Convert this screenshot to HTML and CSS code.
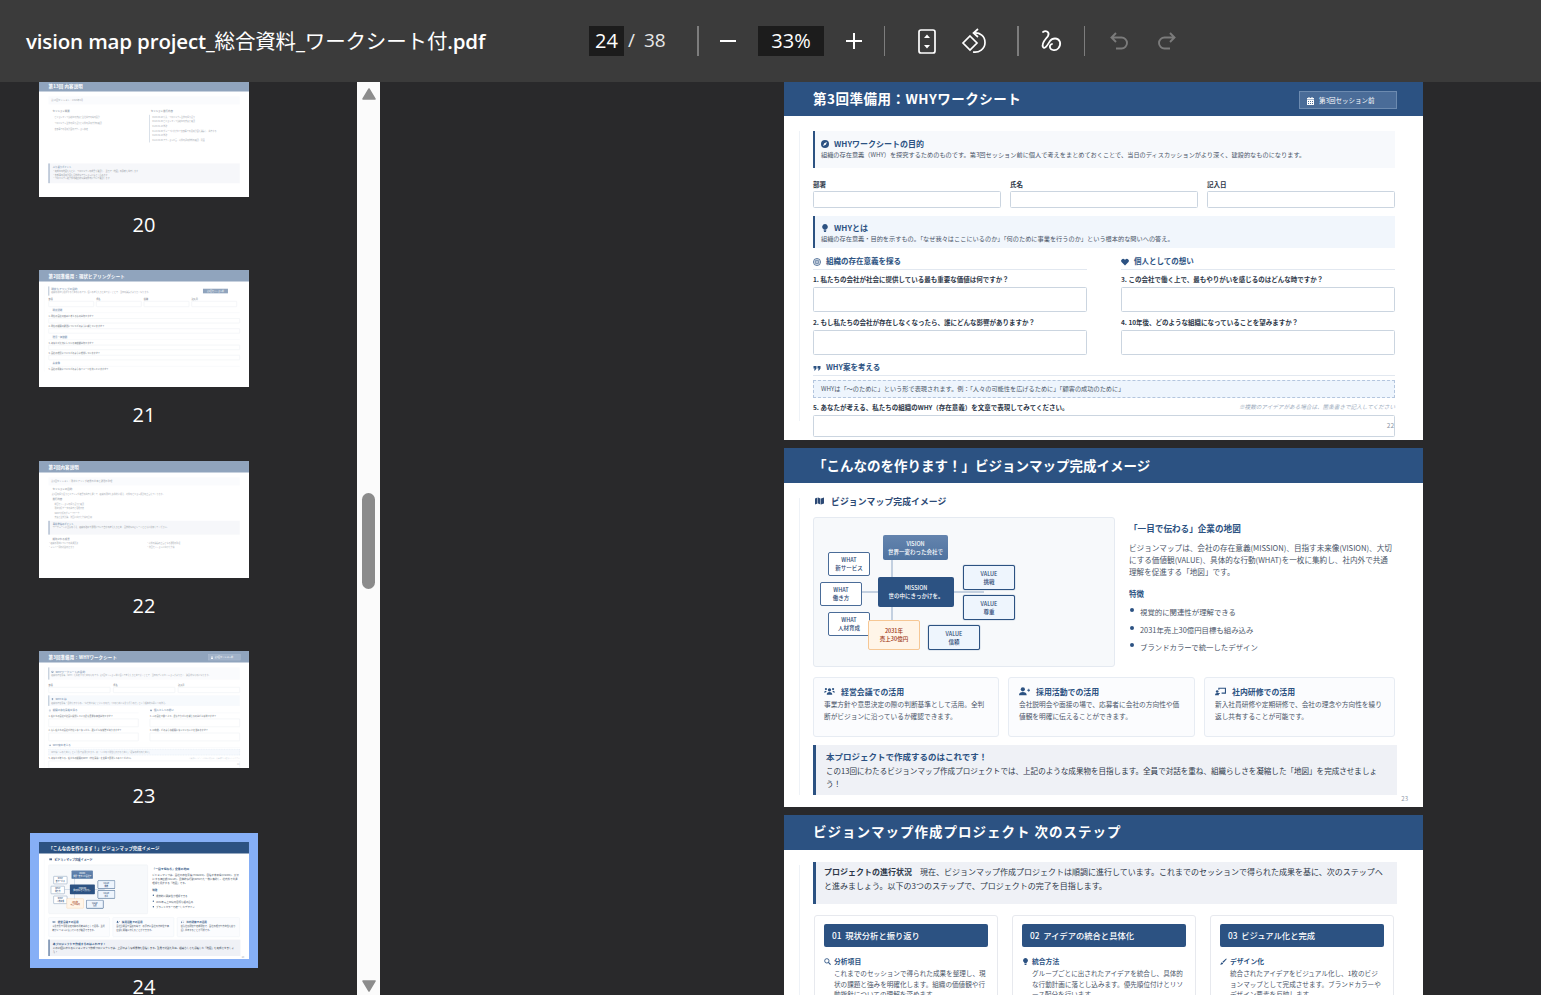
FILE: index.html
```html
<!DOCTYPE html>
<html lang="ja">
<head>
    <meta charset="UTF-8">
    <title>vision map project_総合資料_ワークシート付.pdf</title>
    <link rel="stylesheet" href="styles.css">
    <script src="script.js" defer></script>
</head>
<body>
    <svg class="sprite" width="0" height="0">
        <symbol id="i-compass" viewBox="0 0 16 16"><circle cx="8" cy="8" r="8" fill="currentColor"/><path d="M12 4 9.5 9.5 4 12l2.5-5.500z" fill="#fff"/></symbol>
        <symbol id="i-bulb" viewBox="0 0 12 16"><path d="M6 0a5.500 5.500 0 0 0-3.200 10c.5.400.7 1 .7 1.500h5c0-.5.200-1.100.7-1.500A5.500 5.500 0 0 0 6 0zM3.500 12.500h5V14l-1 2h-3l-1-2z" fill="currentColor"/></symbol>
        <symbol id="i-target" viewBox="0 0 16 16"><circle cx="8" cy="8" r="7" fill="none" stroke="currentColor" stroke-width="1.600"/><circle cx="8" cy="8" r="3.800" fill="none" stroke="currentColor" stroke-width="1.500"/><circle cx="8" cy="8" r="1.300" fill="currentColor"/></symbol>
        <symbol id="i-heart" viewBox="0 0 16 16"><path d="M8 15 1.500 8.500a4 4 0 0 1 5.700-5.700l.8.800.8-.8a4 4 0 0 1 5.700 5.700z" fill="currentColor"/></symbol>
        <symbol id="i-quote" viewBox="0 0 16 16"><path d="M1 4h6v5l-3 4H2l1.500-4H1zM9 4h6v5l-3 4h-2l1.500-4H9z" fill="currentColor"/></symbol>
        <symbol id="i-calendar" viewBox="0 0 14 16"><path d="M3 0h2v2h4V0h2v2h3v3H0V2h3zM0 6h14v10H0zm2 2v2h2V8zm4 0v2h2V8zm4 0v2h2V8zm-8 4v2h2v-2zm4 0v2h2v-2zm4 0v2h2v-2z" fill="currentColor" fill-rule="evenodd"/></symbol>
        <symbol id="i-map" viewBox="0 0 18 16"><path d="M0 3 5 1v12l-5 2zM6 1l5 2v12l-5-2zM12 3l6-2v12l-6 2z" fill="currentColor"/></symbol>
        <symbol id="i-users" viewBox="0 0 20 16"><circle cx="10" cy="5" r="3" fill="currentColor"/><circle cx="3.500" cy="3.500" r="2" fill="currentColor"/><circle cx="16.500" cy="3.500" r="2" fill="currentColor"/><path d="M5 14c0-3 2-5 5-5s5 2 5 5zM0 10c0-2 1.200-3 3.500-3 .7 0 1.200.5 1.500 1-1.200.7-2 1.500-2.300 2zM20 10c0-2-1.200-3-3.500-3-.7 0-1.200.5-1.500 1 1.200.7 2 1.500 2.300 2z" fill="currentColor"/></symbol>
        <symbol id="i-userplus" viewBox="0 0 20 16"><circle cx="7" cy="4" r="3.800" fill="currentColor"/><path d="M0 15c0-4 3-6 7-6s7 2 7 6zM15 5h2V3h1.500v2H20v1.500h-1.500v2H17v-2h-2z" fill="currentColor"/></symbol>
        <symbol id="i-board" viewBox="0 0 20 16"><path d="M6 1h14v11h-8v-2h6V3H8v2H6z" fill="currentColor"/><circle cx="4" cy="8" r="2.400" fill="currentColor"/><path d="M0 15c0-3 1.500-4.500 4-4.500h5V12H7v3z" fill="currentColor"/></symbol>
        <symbol id="i-search" viewBox="0 0 16 16"><circle cx="6.500" cy="6.500" r="5" fill="none" stroke="currentColor" stroke-width="2"/><path d="m10 10 5 5" stroke="currentColor" stroke-width="2.400"/></symbol>
        <symbol id="i-pen" viewBox="0 0 16 16"><path d="M14 1l1.500 1.500L8 11 5.500 8.500zM4.500 9.500l2.500 2.500C6.500 15 3 15.500 0 15c2-1 1.500-4.500 4.500-5.500z" fill="currentColor"/></symbol>
    </svg>

    <header class="toolbar">
        <div class="doc-title">vision map project_<span class="cjk">総合資料_ワークシート付</span>.pdf</div>
        <div class="page-box">24</div>
        <div class="page-total">/ 38</div>
        <div class="sep sep-a"></div>
        <svg class="tool tool-minus" width="16" height="16" viewBox="0 0 16 16"><path d="M0 8h16" stroke="#fff" stroke-width="2"/></svg>
        <div class="zoom-box">33%</div>
        <svg class="tool tool-plus" width="16" height="16" viewBox="0 0 16 16"><path d="M0 8h16M8 0v16" stroke="#fff" stroke-width="2"/></svg>
        <div class="sep sep-b"></div>
        <svg class="tool tool-fit" width="18" height="25" viewBox="0 0 18 25"><rect x="1" y="1" width="16" height="23" rx="2" fill="none" stroke="#fff" stroke-width="1.700"/><path d="M9 5.500 12 9H6zM9 19.500 12 16H6z" fill="#fff"/></svg>
        <svg class="tool tool-rotate" width="27" height="26" viewBox="0 0 27 26"><path d="M9 8 16 15 9 22 2 15z" fill="none" stroke="#fff" stroke-width="1.700"/><path d="M13 5c6-.5 11 3 11 9.500S18 25 12 24" fill="none" stroke="#fff" stroke-width="1.700"/><path d="M17 1l-4.500 4 4.500 4" fill="none" stroke="#fff" stroke-width="1.700"/></svg>
        <div class="sep sep-c"></div>
        <svg class="tool tool-draw" width="22" height="25" viewBox="0 0 22 25"><path d="M3 3C6 1 10 3 8 7 6 10 1 14 3 18c2 3 5-3 7-6 2-3 8-4 10 1 1 5-3 9-7 8-4-1-4-5-1-6" fill="none" stroke="#fff" stroke-width="1.800" stroke-linecap="round"/></svg>
        <div class="sep sep-d"></div>
        <svg class="tool tool-undo" width="18" height="18" viewBox="0 0 18 18"><path d="M6 1 1.500 5.500 6 10M2 5.500h9.500a5 5 0 0 1 0 11H6" fill="none" stroke="#7b7b7b" stroke-width="1.900"/></svg>
        <svg class="tool tool-redo" width="18" height="18" viewBox="0 0 18 18"><path d="M12 1l4.500 4.500L12 10M16 5.500H6.500a5 5 0 0 0 0 11H12" fill="none" stroke="#7b7b7b" stroke-width="1.900"/></svg>
    </header>

    <div class="workspace">
        <aside class="sidebar">
            <div class="thumb-item first">
                <div class="thumb"><div class="thumb-inner faded">
                    <section class="page">
                        <div class="page-head">第13回 内容説明</div>
                        <div class="page-body flat">
                            <div class="tab-row">第13回セッション｜2026年3月</div>
                            <div class="two-col tall">
                                <div>
                                    <h3 class="sec-head plain">セッション概要</h3>
                                    <ul class="mini-list">
                                        <li>ビジョンマップ最終版の発表と全社共有の場の設計</li>
                                        <li>プロジェクト全体の振り返りと今後の運用方法の確認</li>
                                        <li>各部署での活用計画のアクション策定</li>
                                    </ul>
                                </div>
                                <div>
                                    <h3 class="sec-head plain">セッション進行内容</h3>
                                    <ul class="mini-list ruled">
                                        <li>00:00-00:20 導入：プロジェクト全体の振り返り</li>
                                        <li>00:20-01:00 ビジョンマップ最終版の発表と確認</li>
                                        <li>01:00-01:10 休憩</li>
                                        <li>01:10-02:00 グループに分かれて各部署での活用計画を議論し、共有する</li>
                                        <li>02:00-02:10 休憩</li>
                                        <li>02:10-03:00 アクション宣言、今後の運用体制の確認、閉会</li>
                                    </ul>
                                </div>
                            </div>
                            <div class="note-box low">
                                <h4>ふり返りポイント</h4>
                                <p>・完成版の地図をもとに、プロジェクトの成果を確認し、全員で「地図」の意味を共有します</p>
                                <p>・各部署の活用計画を具体的なアクションに落とし込みます</p>
                                <p>・プロジェクト終了後の継続的な運用体制について確認します</p>
                            </div>
                        </div>
                    </section>
                </div></div>
                <div class="thumb-num">20</div>
            </div>
            <div class="thumb-item">
                <div class="thumb"><div class="thumb-inner faded">
                    <section class="page">
                        <div class="page-head">第2回準備用：現状ヒアリングシート</div>
                        <div class="page-body">
                            <div class="hear-top">
                                <div class="info-box short"><h4>現状ヒアリングの目的</h4><p>組織の現状を把握するためのものです。個人の考えをまとめておくことで、当日の議論がより深くなります。</p></div>
                                <span class="hear-tag">第2回セッション前</span>
                            </div>
                            <div class="field-row four">
                                <div class="field"><label>部署</label><div class="input"></div></div>
                                <div class="field"><label>氏名</label><div class="input"></div></div>
                                <div class="field"><label>役職</label><div class="input"></div></div>
                                <div class="field"><label>記入日</label><div class="input"></div></div>
                            </div>
                            <h3 class="sec-head hear">現状認識</h3>
                            <div class="q">1. 現在の会社の強みと考えるものは何ですか？</div><div class="input hear-input"></div>
                            <div class="q">2. 現在の組織の課題についてどのように感じていますか？</div><div class="input hear-input"></div>
                            <h3 class="sec-head hear">理念・価値観</h3>
                            <div class="q">3. あなたが大切にしている価値観は何ですか？</div><div class="input hear-input"></div>
                            <div class="q">4. 会社の理念についてどのように理解していますか？</div><div class="input hear-input"></div>
                            <h3 class="sec-head hear">未来像</h3>
                            <div class="q">5. 会社の将来についてどのようなイメージを持っていますか？</div>
                        </div>
                    </section>
                </div></div>
                <div class="thumb-num">21</div>
            </div>
            <div class="thumb-item">
                <div class="thumb"><div class="thumb-inner faded">
                    <section class="page">
                        <div class="page-head">第2回内容説明</div>
                        <div class="page-body flat">
                            <div class="tab-row">第2回セッション｜現状ヒアリング結果の共有と課題の整理</div>
                            <h3 class="sec-head plain gap">セッションの目的</h3>
                            <p class="lead">第1回の振り返りとヒアリング結果の共有を通じて、組織の現状を多角的に捉え、今後のビジョン検討の土台をつくります。</p>
                            <h3 class="sec-head plain gap">進行内容</h3>
                            <ul class="mini-list dots">
                                <li>前回セッションの振り返りと確認</li>
                                <li>現状分析データの共有と意見交換</li>
                                <li>SWOT分析のグループワーク</li>
                                <li>発表と全体討議、次回に向けた準備の説明</li>
                            </ul>
                            <div class="note-box tight">
                                <h4>事前準備のポイント</h4>
                                <p>ワークシートに記入のうえ、組織の強みや課題について自分の考えをまとめ、具体的なエピソードとともに参加してください。</p>
                            </div>
                            <h3 class="sec-head plain gap">期待される成果</h3>
                            <div class="two-col lean">
                                <span>・組織の現状についての共通認識</span><span>・今後の議論の土台となる課題の整理</span>
                                <span>・メンバー間の対話の深まり</span><span>・次回セッションに向けた準備</span>
                            </div>
                        </div>
                    </section>
                </div></div>
                <div class="thumb-num">22</div>
            </div>
            <div class="thumb-item">
                <div class="thumb"><div class="thumb-inner faded" data-page="page-why"></div></div>
                <div class="thumb-num">23</div>
            </div>
            <div class="thumb-item">
                <div class="thumb selected"><div class="thumb-inner" data-page="page-image"></div></div>
                <div class="thumb-num">24</div>
            </div>
        </aside>

        <div class="scrollbar">
            <svg class="arrow" width="14" height="12" viewBox="0 0 14 12"><path d="M7 1 13 11H1z" fill="#8c8c8c" stroke="#8c8c8c" stroke-width="1.500" stroke-linejoin="round"/></svg>
            <div class="scroll-thumb"></div>
            <svg class="arrow arrow-down" width="14" height="12" viewBox="0 0 14 12"><path d="M7 11 13 1H1z" fill="#8c8c8c" stroke="#8c8c8c" stroke-width="1.500" stroke-linejoin="round"/></svg>
        </div>

        <main class="viewer">
            <!-- WHYワークシート -->
            <section class="page first-page" id="page-why">
                <div class="page-head">
                    <span>第3回準備用：WHYワークシート</span>
                    <span class="head-tag"><svg class="ic"><use href="#i-calendar"/></svg>第3回セッション前</span>
                </div>
                <div class="page-body">
                    <div class="info-box box-purpose">
                        <h4><svg class="ic"><use href="#i-compass"/></svg>WHYワークシートの目的</h4>
                        <p>組織の存在意義（WHY）を探究するためのものです。第3回セッション前に個人で考えをまとめておくことで、当日のディスカッションがより深く、建設的なものになります。</p>
                    </div>
                    <div class="field-row">
                        <div class="field"><label>部署</label><div class="input"></div></div>
                        <div class="field"><label>氏名</label><div class="input"></div></div>
                        <div class="field"><label>記入日</label><div class="input"></div></div>
                    </div>
                    <div class="info-box box-what">
                        <h4><svg class="ic"><use href="#i-bulb"/></svg>WHYとは</h4>
                        <p>組織の存在意義・目的を示すもの。「なぜ我々はここにいるのか」「何のために事業を行うのか」という根本的な問いへの答え。</p>
                    </div>
                    <div class="q-cols">
                        <div>
                            <h3 class="sec-head"><svg class="ic"><use href="#i-target"/></svg>組織の存在意義を探る</h3>
                            <div class="q">1. 私たちの会社が社会に提供している最も重要な価値は何ですか？</div>
                            <div class="input big"></div>
                            <div class="q">2. もし私たちの会社が存在しなくなったら、誰にどんな影響がありますか？</div>
                            <div class="input big"></div>
                        </div>
                        <div>
                            <h3 class="sec-head"><svg class="ic"><use href="#i-heart"/></svg>個人としての想い</h3>
                            <div class="q">3. この会社で働く上で、最もやりがいを感じるのはどんな時ですか？</div>
                            <div class="input big"></div>
                            <div class="q">4. 10年後、どのような組織になっていることを望みますか？</div>
                            <div class="input big"></div>
                        </div>
                    </div>
                    <h3 class="sec-head why-head"><svg class="ic"><use href="#i-quote"/></svg>WHY案を考える</h3>
                    <div class="dashed-box">WHYは「〜のために」という形で表現されます。例：「人々の可能性を広げるために」「顧客の成功のために」</div>
                    <div class="q q-row"><span>5. あなたが考える、私たちの組織のWHY（存在意義）を文章で表現してみてください。</span><em>※複数のアイデアがある場合は、箇条書きで記入してください</em></div>
                    <div class="input last"></div>
                </div>
                <span class="page-num num-in">22</span>
            </section>

            <!-- 完成イメージ -->
            <section class="page" id="page-image">
                <div class="page-head head-tight">「こんなのを作ります！」ビジョンマップ完成イメージ</div>
                <div class="page-body">
                    <h3 class="map-title"><svg class="ic"><use href="#i-map"/></svg>ビジョンマップ完成イメージ</h3>
                    <div class="map-row">
                        <div class="map">
                            <div class="link link-v"></div>
                            <div class="link link-h"></div>
                            <div class="node vision">VISION<br>世界一変わった会社で</div>
                            <div class="node what what-1">WHAT<br>新サービス</div>
                            <div class="node what what-2">WHAT<br>働き方</div>
                            <div class="node what what-3">WHAT<br>人材育成</div>
                            <div class="node mission">MISSION<br>世の中にきっかけを。</div>
                            <div class="node value value-1">VALUE<br>挑戦</div>
                            <div class="node value value-2">VALUE<br>尊重</div>
                            <div class="node value value-3">VALUE<br>信頼</div>
                            <div class="node goal">2031年<br>売上30億円</div>
                        </div>
                        <div class="map-text">
                            <h4>「一目で伝わる」企業の地図</h4>
                            <p>ビジョンマップは、会社の存在意義(MISSION)、目指す未来像(VISION)、大切にする価値観(VALUE)、具体的な行動(WHAT)を一枚に集約し、社内外で共通理解を促進する「地図」です。</p>
                            <h5>特徴</h5>
                            <ul>
                                <li>視覚的に関連性が理解できる</li>
                                <li>2031年売上30億円目標も組み込み</li>
                                <li>ブランドカラーで統一したデザイン</li>
                            </ul>
                        </div>
                    </div>
                    <div class="use-cards">
                        <div class="use-card">
                            <h4><svg class="ic"><use href="#i-users"/></svg>経営会議での活用</h4>
                            <p>事業方針や意思決定の際の判断基準として活用。全判断がビジョンに沿っているか確認できます。</p>
                        </div>
                        <div class="use-card">
                            <h4><svg class="ic"><use href="#i-userplus"/></svg>採用活動での活用</h4>
                            <p>会社説明会や面接の場で、応募者に会社の方向性や価値観を明確に伝えることができます。</p>
                        </div>
                        <div class="use-card">
                            <h4><svg class="ic"><use href="#i-board"/></svg>社内研修での活用</h4>
                            <p>新入社員研修や定期研修で、会社の理念や方向性を繰り返し共有することが可能です。</p>
                        </div>
                    </div>
                    <div class="note-box goal-note">
                        <h4>本プロジェクトで作成するのはこれです！</h4>
                        <p>この13回にわたるビジョンマップ作成プロジェクトでは、上記のような成果物を目指します。全員で対話を重ね、組織らしさを凝縮した「地図」を完成させましょう！</p>
                    </div>
                </div>
                <span class="page-num num-out">23</span>
            </section>

            <!-- 次のステップ -->
            <section class="page" id="page-next">
                <div class="page-head head-wide">ビジョンマップ作成プロジェクト 次のステップ</div>
                <div class="page-body">
                    <div class="note-box status">
                        <p><strong>プロジェクトの進行状況</strong>　現在、ビジョンマップ作成プロジェクトは順調に進行しています。これまでのセッションで得られた成果を基に、次のステップへと進みましょう。以下の3つのステップで、プロジェクトの完了を目指します。</p>
                    </div>
                    <div class="step-cards">
                        <div class="step-card">
                            <div class="step-bar">01&nbsp; 現状分析と振り返り</div>
                            <h5><svg class="ic"><use href="#i-search"/></svg>分析項目</h5>
                            <p>これまでのセッションで得られた成果を整理し、現状の課題と強みを明確化します。組織の価値観や行動指針についての理解を深めます。</p>
                        </div>
                        <div class="step-card">
                            <div class="step-bar">02&nbsp; アイデアの統合と具体化</div>
                            <h5><svg class="ic"><use href="#i-bulb"/></svg>統合方法</h5>
                            <p>グループごとに出されたアイデアを統合し、具体的な行動計画に落とし込みます。優先順位付けとリソース配分を行います。</p>
                        </div>
                        <div class="step-card">
                            <div class="step-bar">03&nbsp; ビジュアル化と完成</div>
                            <h5><svg class="ic"><use href="#i-pen"/></svg>デザイン化</h5>
                            <p>統合されたアイデアをビジュアル化し、1枚のビジョンマップとして完成させます。ブランドカラーやデザイン要素を反映します。</p>
                        </div>
                    </div>
                </div>
            </section>
        </main>
    </div>
</body>
</html>
```

FILE: styles.css
```css
* {
    box-sizing: border-box;
}

html, body {
    margin: 0;
    height: 100%;
}

body {
    display: flex;
    flex-direction: column;
    overflow: hidden;
    background: #29292b;
    font-family: "Open Sans", "Noto Sans CJK JP", sans-serif;
}

h3, h4, h5, p, ul {
    margin: 0;
    padding: 0;
}

ul {
    list-style: none;
}

.sprite {
    display: block;
    height: 0;
}

.ic {
    flex: none;
    display: block;
}

/* ツールバー */
.toolbar {
    flex: none;
    position: relative;
    z-index: 2;
    display: flex;
    align-items: center;
    height: 82px;
    padding-left: 26px;
    background: #3b3b3b;
    color: #fff;
}

.doc-title {
    width: 563px;
    padding-bottom: 2px;
    font-size: 20.5px;
    font-weight: 600;
    letter-spacing: -0.15px;
    white-space: nowrap;
}

.doc-title .cjk {
    font-weight: 400;
}

.page-box, .zoom-box {
    display: flex;
    align-items: center;
    justify-content: center;
    height: 30px;
    padding-bottom: 2px;
    background: #1c1c1c;
    font-size: 20px;
}

.page-box {
    width: 35px;
}

.zoom-box {
    width: 66px;
    margin-left: 22px;
}

.page-total {
    width: 43px;
    margin-left: 4px;
    padding-bottom: 2px;
    font-size: 19px;
    word-spacing: 4px;
    color: #e8e8e8;
    white-space: nowrap;
}

.sep {
    flex: none;
    height: 30px;
    background: #7d7d7d;
}

.sep-a { width: 2px; margin-left: 26px; }
.sep-b { width: 1px; margin-left: 22px; }
.sep-c { width: 2px; margin-left: 29px; }
.sep-d { width: 1px; margin-left: 22px; }

.tool { flex: none; display: block; }
.tool-minus { margin-left: 21px; }
.tool-plus { margin-left: 22px; }
.tool-fit { margin-left: 33px; }
.tool-rotate { margin-left: 25px; }
.tool-draw { margin-left: 21px; }
.tool-undo { margin-left: 25px; }
.tool-redo { margin-left: 30px; }

.workspace {
    flex: 1;
    display: flex;
    min-height: 0;
}

/* サムネイル */
.sidebar {
    flex: none;
    width: 357px;
    overflow: hidden;
    background: #29292b;
}

.thumb-item {
    height: 190.5px;
    padding-left: 39px;
}

.thumb-item.first {
    margin-top: -2.5px;
}

.thumb {
    width: 210px;
    height: 117px;
    background: #fff;
    overflow: hidden;
}

.thumb.selected {
    box-shadow: 0 0 0 9px #86aff6;
    clip-path: inset(-9px -9px -10px -9px);
}

.thumb-inner {
    width: 639px;
    height: 356px;
    overflow: hidden;
    transform: scale(0.3286);
    transform-origin: top left;
}

.thumb-inner.faded {
    opacity: 0.52;
}

.thumb-num {
    width: 210px;
    margin-top: 14px;
    text-align: center;
    color: #fff;
    font-size: 20px;
    line-height: 28px;
}

/* スクロールバー */
.scrollbar {
    flex: none;
    display: flex;
    flex-direction: column;
    align-items: center;
    width: 23px;
    padding: 6px 0 3px;
    background: #fbfbfb;
}

.arrow {
    flex: none;
    display: block;
}

.arrow-down {
    margin-top: auto;
}

.scroll-thumb {
    flex: none;
    width: 13px;
    height: 96px;
    margin-top: 393px;
    border-radius: 6.5px;
    background: #8b8b8b;
}

/* ページ表示 */
.viewer {
    flex: 1;
    min-width: 0;
    overflow: hidden;
    padding-left: 404px;
    background: #29292b;
}

.page {
    position: relative;
    width: 639px;
    height: 359px;
    margin-bottom: 8px;
    overflow: hidden;
    background: #fff;
    color: #4a5568;
    font-family: "Noto Sans CJK JP", "Noto Sans", sans-serif;
}

.viewer .page:last-child {
    height: 400px;
}

.first-page {
    margin-top: -1px;
}

.page-head {
    display: flex;
    align-items: center;
    justify-content: space-between;
    height: 35px;
    padding: 0 26px 2px 29px;
    background: #2c5282;
    color: #fff;
    font-size: 13.5px;
    font-weight: 700;
    letter-spacing: 0.5px;
}

.head-tight {
    letter-spacing: 0;
}

.head-wide {
    padding-bottom: 4px;
    letter-spacing: 1px;
}

.head-tag {
    display: flex;
    align-items: center;
    gap: 5px;
    width: 98px;
    height: 18px;
    margin-top: 5px;
    padding-left: 7px;
    border: 1px solid #6d8bb0;
    background: #4a6c98;
    font-size: 6.5px;
    font-weight: 400;
    letter-spacing: 0;
}

.head-tag .ic {
    width: 7px;
    height: 8px;
    margin-top: 2px;
}

.page-body {
    display: flex;
    flex-direction: column;
    width: 598px;
    margin: 15px 0 0 15px;
    padding-left: 13px;
    border-left: 1.5px solid #eef2f7;
}

.page-body.flat {
    border-left-color: transparent;
}

.first-page .page-body {
    height: 290px;
}

/* 説明ボックス */
.info-box {
    flex: none;
    width: 582px;
    padding-left: 6px;
    border-left: 2px solid #2c5282;
    background: #f7f9fc;
}

.box-purpose {
    height: 37px;
    padding-top: 6px;
}

.box-what {
    height: 32px;
    margin-top: 8px;
    padding-top: 5px;
    background: #f1f6fc;
}

.info-box h4 {
    display: flex;
    align-items: center;
    gap: 5px;
    height: 12px;
    color: #2c5282;
    font-size: 8px;
    font-weight: 700;
}

.info-box .ic {
    width: 8px;
    height: 8px;
    margin-top: 1px;
}

.info-box p {
    font-size: 6.2px;
    line-height: 12px;
    white-space: nowrap;
}

.field-row {
    flex: none;
    display: grid;
    grid-template-columns: repeat(3, 188px);
    gap: 9px;
    width: 582px;
    margin-top: 10px;
}

.field-row.four {
    grid-template-columns: repeat(4, 138px);
    gap: 7px;
    margin-top: 4px;
}

.field label {
    display: block;
    height: 13px;
    color: #2d3748;
    font-size: 6.5px;
    font-weight: 700;
    line-height: 12px;
}

.input {
    height: 17px;
    border: 1px solid #cbd5e0;
    border-radius: 1.5px;
    background: #fff;
}

.q-cols {
    flex: none;
    display: grid;
    grid-template-columns: 274px 274px;
    gap: 34px;
    width: 582px;
    margin-top: 6px;
}

.sec-head {
    display: flex;
    align-items: center;
    gap: 5px;
    height: 16px;
    padding-bottom: 2px;
    border-bottom: 1px solid #e2e8f0;
    color: #2c5282;
    font-size: 7.5px;
    font-weight: 700;
}

.sec-head .ic {
    width: 8px;
    height: 8px;
    margin-top: 2px;
}

.q {
    height: 13px;
    margin-top: 3px;
    color: #2d3748;
    font-size: 6.5px;
    font-weight: 700;
    line-height: 13px;
    white-space: nowrap;
}

.input.big {
    height: 25px;
    margin-top: 1px;
}

.input.big + .q {
    margin-top: 4px;
}

.why-head {
    flex: none;
    width: 582px;
    height: 16px;
    margin-top: 5px;
}

.dashed-box {
    flex: none;
    width: 582px;
    height: 18px;
    margin-top: 4px;
    padding-left: 7px;
    border: 1px dashed #b4c6de;
    background: #eef5fd;
    font-size: 6.2px;
    line-height: 16px;
}

.q-row {
    flex: none;
    display: flex;
    justify-content: space-between;
    width: 582px;
    margin-top: 3px;
}

.q-row em {
    color: #a0aec0;
    font-size: 5.6px;
    font-weight: 400;
}

.input.last {
    flex: none;
    width: 582px;
    height: 22px;
    margin-top: 1px;
}

.page-num {
    position: absolute;
    color: #8a94a3;
    font-size: 6.5px;
}

.num-in {
    right: 29px;
    bottom: 10px;
}

.num-out {
    right: 15px;
    bottom: 4px;
    font-size: 6px;
}

/* ビジョンマップ */
.map-title {
    display: flex;
    align-items: center;
    gap: 7px;
    height: 14px;
    margin-top: -4px;
    padding-left: 2px;
    color: #2d4a75;
    font-size: 8.8px;
    font-weight: 700;
    letter-spacing: 0.1px;
}

.map-title .ic {
    width: 9px;
    height: 8px;
}

.map-row {
    display: flex;
    gap: 14px;
    margin-top: 9px;
}

.map {
    position: relative;
    flex: none;
    width: 302px;
    height: 150px;
    border: 1px solid #e5eaf1;
    border-radius: 3px;
    background: #f7f9fb;
}

.link {
    position: absolute;
    background: #c3d0e0;
}

.link-v {
    left: 77px;
    top: 40px;
    width: 2px;
    height: 64px;
}

.link-h {
    left: 48px;
    top: 73px;
    width: 122px;
    height: 2px;
}

.node {
    position: absolute;
    display: flex;
    align-items: center;
    justify-content: center;
    text-align: center;
    border-radius: 2px;
    font-size: 5.5px;
    font-weight: 500;
    line-height: 8px;
}

.vision {
    left: 69px;
    top: 17px;
    width: 65px;
    height: 25px;
    background: linear-gradient(#6484ae, #4f73a0);
    color: #fff;
}

.mission {
    left: 64px;
    top: 59px;
    width: 76px;
    height: 30px;
    background: #2c5282;
    color: #fff;
}

.what {
    width: 42px;
    height: 24px;
    border: 1px solid #4a6c98;
    background: #fff;
    color: #2d4a75;
}

.what-1 { left: 14px; top: 34px; }
.what-2 { left: 6px; top: 64px; }
.what-3 { left: 14px; top: 94px; }

.value {
    width: 52px;
    height: 25px;
    border: 1px solid #2c5282;
    box-shadow: 0 0 1px #2c5282;
    background: #eef5fd;
    color: #2d4a75;
}

.value-1 { left: 149px; top: 47px; }
.value-2 { left: 149px; top: 77px; }
.value-3 { left: 114px; top: 107px; }

.goal {
    left: 54px;
    top: 102px;
    width: 52px;
    height: 30px;
    border: 1px solid #f6c794;
    background: #fff5e8;
    color: #9c3412;
}

.map-text {
    flex: 1;
    width: 266px;
    padding-top: 5px;
}

.map-text h4 {
    color: #2c5282;
    font-size: 8.6px;
    font-weight: 700;
    line-height: 12px;
}

.map-text p {
    width: 265px;
    margin-top: 8px;
    font-size: 7.6px;
    line-height: 12px;
}

.map-text h5 {
    margin-top: 10px;
    color: #2c5282;
    font-size: 7.5px;
    font-weight: 700;
    line-height: 12px;
}

.map-text ul {
    margin-top: 6px;
}

.map-text li {
    position: relative;
    height: 17.5px;
    padding-left: 11px;
    font-size: 7.4px;
    line-height: 12px;
}

.map-text li::before {
    content: "";
    position: absolute;
    left: 1px;
    top: 2px;
    width: 4px;
    height: 4px;
    border-radius: 50%;
    background: #2c5282;
}

/* 活用カード */
.use-cards {
    display: grid;
    grid-template-columns: 186px 187px 191px;
    gap: 9px;
    margin-top: 10px;
}

.use-card {
    height: 60px;
    padding: 7px 10px;
    border: 1px solid #e7ecf3;
    border-radius: 3px;
    background: #fbfcfe;
}

.use-card h4 {
    display: flex;
    align-items: center;
    gap: 6px;
    height: 12px;
    color: #2c5282;
    font-size: 7.9px;
    font-weight: 700;
}

.use-card .ic {
    width: 11px;
    height: 9px;
}

.use-card p {
    margin-top: 2px;
    font-size: 6.7px;
    line-height: 11.5px;
}

.note-box {
    width: 584px;
    height: 50px;
    margin-top: 8px;
    padding: 5px 12px 0 10px;
    border-left: 3px solid #2c5282;
    background: #eff1f6;
    color: #2d3748;
}

.note-box h4 {
    color: #2c5282;
    font-size: 8.5px;
    font-weight: 700;
    line-height: 13px;
}

.note-box p {
    margin-top: 2px;
    font-size: 8px;
    line-height: 12.5px;
}

.goal-note {
    padding-right: 16px;
}

.goal-note p {
    font-size: 7.55px;
}

.note-box.status {
    height: 42px;
    margin-top: -3px;
    padding: 3px 8px 0 8px;
}

.note-box.status p {
    margin-top: 0;
    line-height: 14px;
}

.note-box.low {
    width: 582px;
    height: 60px;
    margin-top: 8px;
}

.note-box.low h4,
.note-box.tight h4 {
    font-size: 7px;
}

.note-box.low p {
    margin-top: 0;
    font-size: 6.2px;
    line-height: 11px;
}

.note-box.tight {
    width: 582px;
    height: 42px;
    margin-top: 5px;
    padding-top: 3px;
}

.note-box.tight p {
    margin-top: 0;
    font-size: 6.2px;
    line-height: 10px;
}

/* ステップカード */
.step-cards {
    display: grid;
    grid-template-columns: repeat(3, 184px);
    gap: 14px;
    margin: 11px 0 0 1px;
}

.step-card {
    height: 130px;
    padding: 8px 9px;
    border: 1px solid #e7e9ee;
    border-radius: 3px;
    background: #fff;
}

.step-bar {
    height: 23px;
    padding-left: 8px;
    border-radius: 2px;
    background: #2c5282;
    color: #fff;
    font-size: 8.3px;
    font-weight: 500;
    line-height: 23px;
    white-space: nowrap;
}

.step-card h5 {
    display: flex;
    align-items: center;
    gap: 3px;
    height: 12px;
    margin-top: 8px;
    color: #2c5282;
    font-size: 6.8px;
    font-weight: 700;
}

.step-card .ic {
    width: 7px;
    height: 7px;
}

.step-card p {
    margin-top: 1px;
    padding-left: 10px;
    font-size: 6.6px;
    line-height: 10.7px;
}

/* サムネイル専用ページ */
.tab-row {
    width: 582px;
    height: 24px;
    padding-left: 8px;
    background: #f7f9fc;
    font-size: 7px;
    line-height: 24px;
}

.two-col {
    display: grid;
    grid-template-columns: 1fr 1fr;
    gap: 16px;
    width: 582px;
    margin-top: 12px;
}

.two-col.tall {
    height: 160px;
}

.two-col.lean {
    row-gap: 2px;
    margin-top: 2px;
    font-size: 6px;
    line-height: 10px;
}

.sec-head.plain {
    border-bottom: none;
    padding-left: 12px;
    color: #4a5568;
}

.sec-head.gap {
    margin-top: 4px;
}

.sec-head.hear {
    width: 582px;
    margin-top: 3px;
    padding-left: 12px;
}

.mini-list {
    margin-top: 4px;
    padding-left: 18px;
    font-size: 6px;
    line-height: 17px;
}

.mini-list.ruled {
    margin-left: 8px;
    padding-left: 8px;
    border-left: 1px solid #2c5282;
    line-height: 14px;
}

.mini-list.dots {
    margin-top: 0;
    line-height: 13px;
}

.lead {
    width: 582px;
    padding-left: 10px;
    font-size: 6.2px;
    line-height: 11px;
}

.hear-top {
    display: flex;
    align-items: center;
    gap: 30px;
    width: 582px;
}

.info-box.short {
    width: 440px;
    height: 28px;
    padding-top: 1px;
    background: #fff;
}

.hear-tag {
    width: 76px;
    height: 14px;
    background: #2c5282;
    color: #fff;
    font-size: 6px;
    line-height: 14px;
    text-align: center;
}

.input.hear-input {
    width: 582px;
    height: 15px;
}

.page-body .q {
    width: 582px;
}
```

FILE: script.js
```js
// サムネイルは本文のページをそのまま縮小して使う
document.querySelectorAll(".thumb-inner[data-page]").forEach(thumb => {
    const copy = document.getElementById(thumb.dataset.page).cloneNode(true);
    copy.removeAttribute("id");
    copy.classList.remove("first-page");
    thumb.appendChild(copy);
});
```
